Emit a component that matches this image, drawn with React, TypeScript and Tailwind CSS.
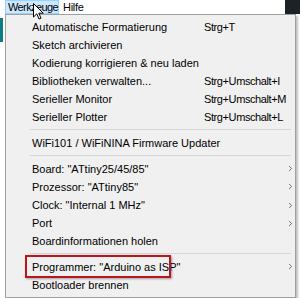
import { ChevronRight } from 'lucide-react';

type Row =
  | { kind: 'item'; label: string; shortcut?: string; sub?: boolean; boxed?: boolean }
  | { kind: 'sep' };

const ROWS: Row[] = [
  { kind: 'item', label: 'Automatische Formatierung', shortcut: 'Strg+T' },
  { kind: 'item', label: 'Sketch archivieren' },
  { kind: 'item', label: 'Kodierung korrigieren & neu laden' },
  { kind: 'item', label: 'Bibliotheken verwalten...', shortcut: 'Strg+Umschalt+I' },
  { kind: 'item', label: 'Serieller Monitor', shortcut: 'Strg+Umschalt+M' },
  { kind: 'item', label: 'Serieller Plotter', shortcut: 'Strg+Umschalt+L' },
  { kind: 'sep' },
  { kind: 'item', label: 'WiFi101 / WiFiNINA Firmware Updater' },
  { kind: 'sep' },
  { kind: 'item', label: 'Board: "ATtiny25/45/85"', sub: true },
  { kind: 'item', label: 'Prozessor: "ATtiny85"', sub: true },
  { kind: 'item', label: 'Clock: "Internal 1 MHz"', sub: true },
  { kind: 'item', label: 'Port', sub: true },
  { kind: 'item', label: 'Boardinformationen holen' },
  { kind: 'sep' },
  { kind: 'item', label: 'Programmer: "Arduino as ISP"', sub: true, boxed: true },
  { kind: 'item', label: 'Bootloader brennen' },
];

function Cursor() {
  return (
    <svg className="absolute left-[33px] top-[3px]" width="12" height="18" viewBox="0 0 12 18">
      <path d="M0.5 0.5 L0.5 14 L3.8 10.8 L6 16 L8 15.2 L5.8 10.2 L10.2 10.2 Z" fill="#fff" stroke="#000" strokeWidth="1" strokeLinejoin="round" />
    </svg>
  );
}

export default function App() {
  return (
    <div
      className="relative flex h-[298px] w-[300px] flex-col overflow-hidden bg-white text-black"
      style={{ fontFamily: '"Liberation Sans", Arial, sans-serif' }}
    >
      {/* menu bar */}
      <div className="flex h-[14px] shrink-0 items-stretch bg-white text-[11px] leading-[12px]">
        <div className="ml-[5px] w-[54px] border border-[#99d1ff] bg-[#cce8ff] pl-[2px] tracking-[-0.6px]">Werkzeuge</div>
        <div className="pl-[4px] pt-[1px] tracking-[-0.3px]">Hilfe</div>
        <div className="ml-auto w-[15px] bg-[#1d2226]" />
      </div>
      <Cursor />

      <div className="flex flex-1">
        {/* IDE window behind the menu, left edge */}
        <div className="flex w-[5px] flex-col pt-[4px]">
          <div className="h-[24px] w-[3px] bg-[#0f7c84]" />
        </div>

        {/* dropdown */}
        <div className="w-[291px] border border-[#a0a0a0] bg-[#f0f0f0] pt-[3px] text-[11px] shadow-[2px_2px_2px_rgba(0,0,0,0.25)]">
          {ROWS.map((row, i) =>
            row.kind === 'sep' ? (
              <div key={i} className="h-[7.6px] pl-[24px] pr-[4px] pt-[2.5px]">
                <div className="h-px bg-[#d7d7d7]" />
              </div>
            ) : (
              <div key={i} className="relative flex h-[18.1px] items-center pl-[26px]">
                {row.boxed && (
                  <div className="absolute left-[19px] top-[-3px] h-[23px] w-[146px] border-2 border-[#c0141c] shadow-[1px_1px_2px_rgba(0,0,0,0.35)]" />
                )}
                <span className="w-[172px] whitespace-nowrap">{row.label}</span>
                {row.shortcut && (
                  <span className="whitespace-nowrap tracking-[-0.4px]">{row.shortcut}</span>
                )}
                {row.sub && (
                  <ChevronRight className="ml-auto mr-[0px] h-[9px] w-[9px] text-[#444]" strokeWidth={2} />
                )}
              </div>
            )
          )}
        </div>
      </div>
    </div>
  );
}
